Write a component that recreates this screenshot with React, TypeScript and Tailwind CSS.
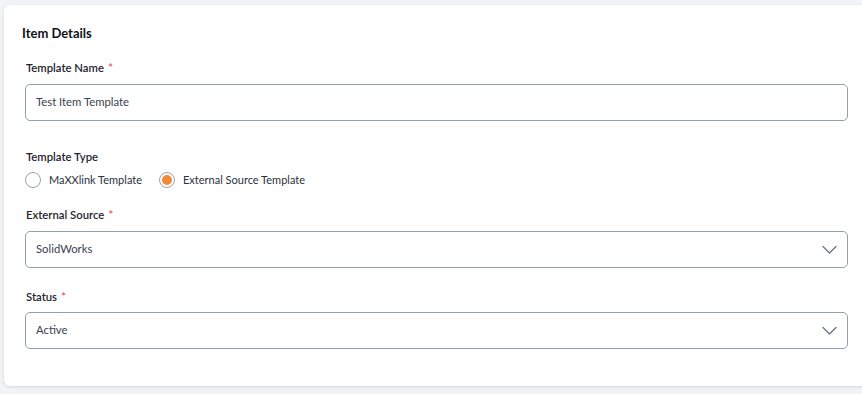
import React from 'react';

const Label: React.FC<{ text: string; required?: boolean; className?: string }> = ({ text, required, className }) => (
  <div className={`h-4 text-[11.3px] leading-4 font-semibold text-[#1f2430] pl-[1px] ${className ?? ''}`}>
    {text}
    {required && <span className="text-[12px] text-[#f0555a] ml-[4px]">*</span>}
  </div>
);

const Chevron: React.FC = () => (
  <svg width="15" height="9" viewBox="0 0 15 9" fill="none" className="text-[#6b7385]">
    <path d="M1 1.5l6.5 6.5 6.5-6.5" stroke="currentColor" strokeWidth="1.3" strokeLinecap="round" strokeLinejoin="round" />
  </svg>
);

const Radio: React.FC<{ checked?: boolean; label: string }> = ({ checked, label }) => (
  <div className="flex items-center gap-2">
    <div className="w-[16px] h-[16px] rounded-full border border-[#9aa2b1] flex items-center justify-center bg-white">
      {checked && <div className="w-[10px] h-[10px] rounded-full bg-[#f28a3c]" />}
    </div>
    <span className="text-[11px] leading-4 text-[#2a3040]">{label}</span>
  </div>
);

const App: React.FC = () => {
  return (
    <div className="w-[862px] h-[394px] bg-[#f1f3f6] pl-[4px] pt-[5px] overflow-hidden" style={{ fontFamily: 'Lato, "Noto Sans", sans-serif' }}>
      <div className="w-[870px] h-[381px] bg-white rounded-[6px] shadow-[0_1px_3px_rgba(0,0,0,0.12)] pl-[21px] pt-[18px]">
        <h3 className="-ml-[3px] h-5 text-[13px] leading-5 font-bold text-[#111318]">Item Details</h3>

        <Label text="Template Name" required className="mt-[17px]" />
        <div className="mt-[8px] w-[823px] h-[37px] rounded-[5px] border border-[#939db0] flex items-center px-[10px] text-[11.3px] text-[#3a4150]">
          Test Item Template
        </div>

        <Label text="Template Type" className="mt-[28px]" />
        <div className="mt-[7px] flex items-center gap-[17px]">
          <Radio label="MaXXlink Template" />
          <Radio checked label="External Source Template" />
        </div>

        <Label text="External Source" required className="mt-[19px]" />
        <div className="mt-[8px] w-[823px] h-[37px] rounded-[5px] border border-[#939db0] flex items-center justify-between pl-[10px] pr-[10px] text-[11.3px] text-[#3a4150]">
          <span>SolidWorks</span>
          <Chevron />
        </div>

        <Label text="Status" required className="mt-[21px]" />
        <div className="mt-[7px] w-[823px] h-[37px] rounded-[5px] border border-[#939db0] flex items-center justify-between pl-[10px] pr-[10px] text-[11.3px] text-[#3a4150]">
          <span>Active</span>
          <Chevron />
        </div>
      </div>
    </div>
  );
};

export default App;
